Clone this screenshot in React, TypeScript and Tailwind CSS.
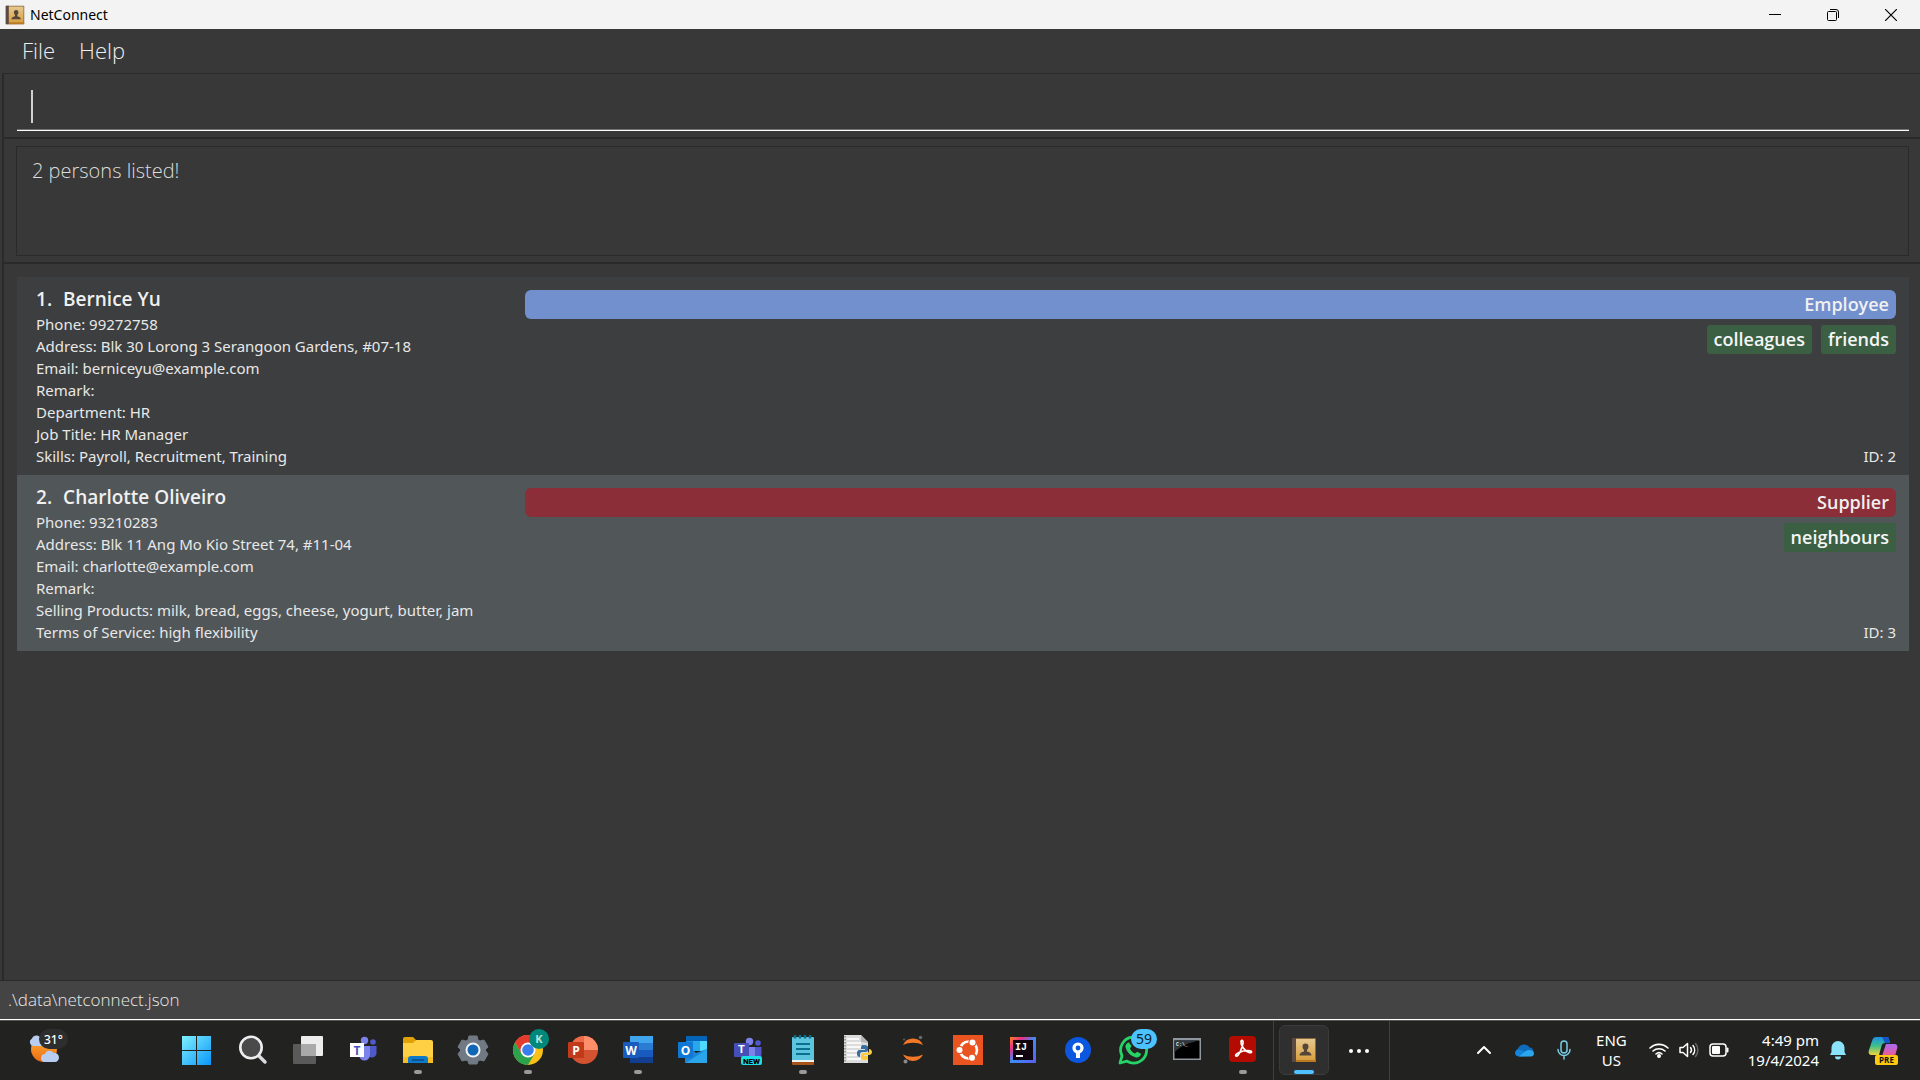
import type { ReactNode } from "react";

type Person = {
  index: number;
  name: string;
  details: string[];
  role: string;
  roleClass: string;
  rowClass: string;
  tags: string[];
  id: number;
};

const people: Person[] = [
  {
    index: 1,
    name: "Bernice Yu",
    details: [
      "Phone: 99272758",
      "Address: Blk 30 Lorong 3 Serangoon Gardens, #07-18",
      "Email: berniceyu@example.com",
      "Remark:",
      "Department: HR",
      "Job Title: HR Manager",
      "Skills: Payroll, Recruitment, Training",
    ],
    role: "Employee",
    roleClass: "bg-[#7290ce]",
    rowClass: "bg-[#3c3e3f]",
    tags: ["colleagues", "friends"],
    id: 2,
  },
  {
    index: 2,
    name: "Charlotte Oliveiro",
    details: [
      "Phone: 93210283",
      "Address: Blk 11 Ang Mo Kio Street 74, #11-04",
      "Email: charlotte@example.com",
      "Remark:",
      "Selling Products: milk, bread, eggs, cheese, yogurt, butter, jam",
      "Terms of Service: high flexibility",
    ],
    role: "Supplier",
    roleClass: "bg-[#8b2e38]",
    rowClass: "bg-[#515658]",
    tags: ["neighbours"],
    id: 3,
  },
];

function BookIcon({ className }: { className: string }) {
  return (
    <svg viewBox="0 0 26 26" className={className} aria-hidden="true">
      <defs>
        <linearGradient id="book" x1="0" y1="0" x2="0" y2="1">
          <stop offset="0" stopColor="#e6c88f" />
          <stop offset="1" stopColor="#d9a040" />
        </linearGradient>
      </defs>
      <rect x="1" y="1" width="24" height="24" rx="1" fill="#8a6a3c" />
      <rect x="1" y="1" width="4" height="24" fill="#5b4a41" />
      <rect x="5" y="2" width="19" height="21" fill="url(#book)" />
      <rect x="5" y="23" width="20" height="2" fill="#b97a22" />
      <path d="M14.500 6.500c2 0 3 1.300 3 3 0 1.600-.7 2.700-1.500 3.500v1.500c2.500.6 4.500 1.500 4.500 4h-12c0-2.500 2-3.400 4.500-4v-1.500c-.8-.8-1.500-1.900-1.500-3.500 0-1.700 1-3 3-3z" fill="#54463a" />
    </svg>
  );
}

function PersonCard({ person }: { person: Person }) {
  return (
    <li className={`flex pt-[10px] pr-[13px] pb-[8px] pl-[19px] ${person.rowClass}`}>
      <div className="w-[489px] shrink-0">
        <h2 className="h-[26px] font-['Open_Sans',sans-serif] text-[19px] leading-[24px] font-semibold text-[#f0f0f0]">
          <span>{person.index}.</span>
          <span className="ml-[11px]">{person.name}</span>
        </h2>
        {person.details.map((line) => (
          <p key={line} className="text-[15px] leading-[22px] text-[#e8e8e8]">
            {line}
          </p>
        ))}
      </div>
      <div className="flex min-w-0 grow flex-col items-end pt-[3px] font-['Open_Sans',sans-serif]">
        <div className={`w-full rounded-md pr-[7px] text-right text-[18px] leading-[29px] font-semibold text-[#f0f0f0] ${person.roleClass}`}>
          {person.role}
        </div>
        <div className="mt-[6px] flex gap-[9px]">
          {person.tags.map((tag) => (
            <span key={tag} className="rounded-[3px] bg-[#3a5f43] px-[7px] text-[18px] leading-[29px] font-semibold text-[#f5f5f5]">
              {tag}
            </span>
          ))}
        </div>
        <p className="mt-auto font-['Noto_Sans',sans-serif] text-[15px] leading-[22px] text-[#e8e8e8]">ID: {person.id}</p>
      </div>
    </li>
  );
}

function Icon({ children }: { children: ReactNode }) {
  return (
    <svg viewBox="0 0 30 30" className="size-[30px] overflow-visible" aria-hidden="true">
      {children}
    </svg>
  );
}

const label = "font-['Open_Sans',sans-serif] font-bold";

const teamsPeople = (
  <>
    <circle cx="23" cy="7" r="2.800" fill="#5059c9" />
    <path d="M17 11h9.500v6.500a4.500 4.500 0 0 1-9 1z" fill="#5059c9" />
    <circle cx="14.500" cy="5.500" r="3.700" fill="#7b83eb" />
    <path d="M9 11h11v9a5.500 5.500 0 0 1-11 0z" fill="#7b83eb" />
  </>
);

const apps: { name: string; running?: boolean; icon: ReactNode }[] = [
  {
    name: "Search",
    icon: (
      <>
        <path d="M20 20l7 7" stroke="#d8dadd" strokeWidth="3.500" strokeLinecap="round" />
        <circle cx="13" cy="12.500" r="10.700" fill="#4a4a4a" stroke="#eceef0" strokeWidth="2.600" />
      </>
    ),
  },
  {
    name: "Task view",
    icon: (
      <>
        <rect x="8" y="1" width="22" height="20" rx="1" fill="#ededed" />
        <rect x="0" y="9" width="23" height="20" rx="1" fill="#5a5a5a" />
        <rect x="8" y="9" width="15" height="12" fill="#aaaaaa" />
      </>
    ),
  },
  {
    name: "Microsoft Teams",
    icon: (
      <g transform="translate(2 0)">
        {teamsPeople}
        <rect x="0" y="8" width="14" height="14" fill="#fff" />
        <text x="7" y="19.500" fontSize="12" textAnchor="middle" fill="#4b53bc" className={label}>T</text>
      </g>
    ),
  },
  {
    name: "File Explorer",
    running: true,
    icon: (
      <>
        <path d="M0 4a2 2 0 0 1 2-2h8l3 3-2 5H0z" fill="#e2a106" />
        <path d="M0 8h10l3-3h15a2 2 0 0 1 2 2v21H0z" fill="#ffd044" />
        <path d="M0 22h30v6H0z" fill="#f8bd22" />
        <path d="M5 28v-4a3 3 0 0 1 3-3h14a3 3 0 0 1 3 3v4z" fill="#0f79c9" />
        <path d="M9 25h12" stroke="#0b4a84" strokeWidth="1.500" />
      </>
    ),
  },
  {
    name: "Settings",
    icon: (
      <>
        <path
          d="M11 1h8l1 4 2 1 4-1 4 7-3 3 3 4-4 7-4-1-2 1-1 3h-8l-1-3-2-1-4 1-4-7 3-4-3-3 4-7 4 1 2-1z"
          fill="#717a84"
          stroke="#717a84"
          strokeLinejoin="round"
        />
        <circle cx="15" cy="15" r="7.500" fill="#f1f3f5" />
        <circle cx="15" cy="15" r="5.500" fill="#1267b4" />
      </>
    ),
  },
  {
    name: "Google Chrome",
    running: true,
    icon: (
      <>
        <circle cx="15" cy="15" r="15" fill="#fbc116" />
        <path d="M15 15L2 7.500A15 15 0 0 1 28 7.500z" fill="#e33b2e" />
        <path d="M15 7.500h13A15 15 0 0 0 2 7.500l6.500 11.250z" fill="#e33b2e" />
        <path d="M2 7.500a15 15 0 0 0 13 22.500l6.500-11.250L8.500 18.750z" fill="#2ba24c" />
        <circle cx="15" cy="15" r="7.500" fill="#fff" />
        <circle cx="15" cy="15" r="5.800" fill="#3a7ded" />
        <circle cx="26" cy="4" r="10" fill="#00897b" />
        <text x="26" y="8" fontSize="11" textAnchor="middle" fill="#b9e2dd" className={label}>K</text>
      </>
    ),
  },
  {
    name: "PowerPoint",
    icon: (
      <>
        <circle cx="16" cy="15" r="14" fill="#d35230" />
        <path d="M16 1a14 14 0 0 0-14 14h14z" fill="#ed6c47" />
        <path d="M16 1a14 14 0 0 1 14 14H16z" fill="#ff8f6b" />
        <rect x="0" y="7" width="16" height="16" rx="1" fill="#c13b1b" />
        <text x="8" y="19.500" fontSize="12" textAnchor="middle" fill="#fff" className={label}>P</text>
      </>
    ),
  },
  {
    name: "Word",
    running: true,
    icon: (
      <>
        <rect x="7" y="1" width="23" height="7" fill="#41a5ee" />
        <rect x="7" y="8" width="23" height="7" fill="#2b7cd3" />
        <rect x="7" y="15" width="23" height="7" fill="#185abd" />
        <rect x="7" y="22" width="23" height="6" fill="#103f91" />
        <rect x="0" y="7" width="16" height="16" rx="1" fill="#185abd" />
        <text x="8" y="19.500" fontSize="12" textAnchor="middle" fill="#fff" className={label}>W</text>
      </>
    ),
  },
  {
    name: "Outlook",
    icon: (
      <>
        <rect x="8" y="1" width="21" height="14" fill="#1490df" />
        <rect x="8" y="1" width="21" height="5" fill="#0364b8" />
        <rect x="22" y="6" width="7" height="10" fill="#50d9ff" />
        <rect x="15" y="6" width="7" height="10" fill="#28a8ea" />
        <path d="M7 15h8l3 3 11-4v14H7z" fill="#1a86d8" />
        <path d="M29 14v14H8z" fill="#2aa5ea" />
        <rect x="0" y="7" width="15" height="16" rx="1" fill="#0f78d4" />
        <text x="7.500" y="19.500" fontSize="12" textAnchor="middle" fill="#fff" className={label}>O</text>
      </>
    ),
  },
  {
    name: "Microsoft Teams (new)",
    icon: (
      <g transform="translate(1 0)">
        <g transform="translate(1 1)">{teamsPeople}</g>
        <rect x="0" y="8" width="15" height="14" rx="1" fill="#464eb8" />
        <rect x="7" y="21" width="21" height="9" rx="2" fill="#18e0e6" />
        <text x="7.500" y="18" fontSize="11" textAnchor="middle" fill="#fff" className="font-['Roboto',sans-serif] font-bold">T</text>
        <text x="17.500" y="29" fontSize="8" textAnchor="middle" fill="#000" className="font-['Roboto',sans-serif] font-black">NEW</text>
      </g>
    ),
  },
  {
    name: "Notepad",
    running: true,
    icon: (
      <>
        <rect x="4" y="2" width="22" height="24" rx="1" fill="#5cc4dd" />
        <rect x="4" y="25" width="22" height="2" fill="#eef5f6" />
        <path d="M4 27h22v2a1 1 0 0 1-1 1H5a1 1 0 0 1-1-1z" fill="#a7541a" />
        <path d="M8 9h14M8 14h14M8 19h14" stroke="#0b6f8f" strokeWidth="1.800" />
        <path d="M7 0v3.500M12 0v3.500M17 0v3.500M22 0v3.500" stroke="#0b6f8f" strokeWidth="2.400" />
      </>
    ),
  },
  {
    name: "Python file",
    icon: (
      <g transform="translate(1 0)">
        <path d="M0 0h17l7 7v21H0z" fill="#dcdcdc" />
        <path d="M17 0l7 8-7-1z" fill="#b5b5b5" />
        <path d="M3 4h12M3 8h14M3 12h18M3 16h12M3 20h12M3 24h14" stroke="#f8f8f8" strokeWidth="2" />
        <path d="M1 1v27" stroke="#888" strokeWidth="1.500" strokeDasharray="1.500 1.500" />
        <path d="M20 10c-3 0-3 1.500-3 3v1h4v1h-5c-3 0-3 2-3 4s1 3 3 3v-3c0-1 1-2 2-2h4c1 0 2-1 2-2v-3c0-1-1-2-4-2z" fill="#366f9f" />
        <path d="M21 25c3 0 3-1.500 3-3v-1h-4v-1h5c2 0 3-2 3-3s-1-3-3-3v2c0 1-1 2-2 2h-4c-1 0-2 1-2 2v3c0 1 1 2 4 2z" fill="#ffca3a" />
      </g>
    ),
  },
  {
    name: "Jupyter",
    icon: (
      <>
        <path d="M5 10a11 11 0 0 1 20 0 15 9 0 0 0-20 0z" fill="#f37726" />
        <path d="M5 19.500a11 11 0 0 0 20 0 15 9 0 0 1-20 0z" fill="#f37726" />
        <circle cx="22.500" cy="2.500" r="1.700" fill="#6b6b6b" />
        <circle cx="7.500" cy="26.500" r="2" fill="#8a8a8a" />
        <circle cx="6" cy="4.500" r="1.100" fill="#5c5c5c" />
      </>
    ),
  },
  {
    name: "Ubuntu",
    icon: (
      <>
        <rect width="30" height="30" fill="#e95420" />
        <circle cx="15.500" cy="15" r="8.500" fill="none" stroke="#fff" strokeWidth="2.600" />
        <circle cx="6.500" cy="15" r="4.200" fill="#e95420" />
        <circle cx="19.500" cy="7.500" r="4.200" fill="#e95420" />
        <circle cx="19.500" cy="22.500" r="4.200" fill="#e95420" />
        <circle cx="6.500" cy="15" r="3" fill="#fff" />
        <circle cx="19.500" cy="7.500" r="3" fill="#fff" />
        <circle cx="19" cy="22.800" r="3" fill="#fff" />
      </>
    ),
  },
  {
    name: "IntelliJ IDEA",
    icon: (
      <>
        <defs>
          <linearGradient id="idea" x1="0" y1="0" x2="1" y2="1">
            <stop offset="0" stopColor="#fc801d" />
            <stop offset="0.250" stopColor="#e8308a" />
            <stop offset="0.500" stopColor="#3d8df5" />
            <stop offset="1" stopColor="#5a5cf0" />
          </linearGradient>
        </defs>
        <rect x="2" y="2" width="26" height="26" fill="url(#idea)" />
        <rect x="5" y="5" width="20" height="20" fill="#10050f" />
        <text x="7" y="15" fontSize="10" fill="#fff" className="font-['Liberation_Mono',monospace] font-bold">IJ</text>
        <rect x="8" y="20" width="7" height="2" fill="#fff" />
      </>
    ),
  },
  {
    name: "Sourcetree",
    icon: (
      <>
        <circle cx="15" cy="15" r="13" fill="#0b57e0" />
        <circle cx="15" cy="13" r="4" fill="none" stroke="#fff" strokeWidth="3.200" />
        <rect x="13" y="17" width="4" height="6" fill="#fff" />
      </>
    ),
  },
  {
    name: "WhatsApp",
    icon: (
      <>
        <path d="M2 28l2-7.200A13 13 0 1 1 9 26.200z" fill="none" stroke="#25d366" strokeWidth="2.800" strokeLinejoin="round" />
        <path d="M11 7.500l2.500 3.500-1.500 2.500c1 2.500 2.500 4 5 5l2.300-1.700 3.700 2c-.5 3-3 4-5 3.600-5-1-9.500-5.400-10.500-10.400-.3-2 1.500-4.500 3.500-4.500z" fill="#25d366" />
        <rect x="13" y="-6" width="26" height="20" rx="10" fill="#4cc2ff" />
        <text x="26" y="9" fontSize="14" textAnchor="middle" fill="#10222c" className="font-['Noto_Sans',sans-serif]">59</text>
      </>
    ),
  },
  {
    name: "Command Prompt",
    icon: (
      <>
        <rect x="0" y="3" width="28" height="22" fill="#8f969d" />
        <rect x="1.500" y="5.500" width="25" height="18" fill="#000" />
        <path d="M1.500 5.500h25c-10 2-20 6-25 12z" fill="#30353a" />
        <text x="3" y="11" fontSize="5" fill="#e6e6e6" className="font-['Liberation_Mono',monospace] font-bold">C:\_</text>
      </>
    ),
  },
  {
    name: "Adobe Acrobat",
    running: true,
    icon: (
      <>
        <rect x="1" y="1" width="27" height="26" rx="4" fill="#b30b00" />
        <path d="M8 21c-2-1.500 5-5.500 12-5.500 5 0 4 3 1 2-4-1.500-8.500-7-8-11 .5-2 2.500-1 2 1.500-.7 4.500-4.500 14.500-7 13z" fill="none" stroke="#fff" strokeWidth="1.700" strokeLinejoin="round" />
      </>
    ),
  },
];

function Taskbar() {
  return (
    <footer className="flex h-[60px] shrink-0 border-t border-[#555] bg-[#222321] font-['Noto_Sans',sans-serif] text-white">
      <button type="button" aria-label="Weather" className="flex w-[168px] items-start pt-[14px] pl-[28px]">
        <svg viewBox="0 0 42 30" className="h-[30px] w-[42px] overflow-visible" aria-hidden="true">
          <defs>
            <linearGradient id="sun" x1="0" y1="0" x2="0" y2="1">
              <stop offset="0" stopColor="#fbb53c" />
              <stop offset="1" stopColor="#ee6a10" />
            </linearGradient>
          </defs>
          <circle cx="16" cy="14" r="13" fill="url(#sun)" />
          <path d="M5 11a4 4 0 0 1-1-7.500C5 0 10-.5 12 2l2 9z" fill="#b8cdf0" />
          <path d="M17 27a4 4 0 0 1 0-8c1-4 7-4 8.500-1 3.500-.5 5.500 2 5.500 4.500S29 27 27 27z" fill="#b8cdf0" />
          <rect x="11" y="-6" width="29" height="20" rx="10" fill="#2e2e2e" />
          <text x="16" y="9" fontSize="12" fill="#fff" className="font-['Noto_Sans',sans-serif] font-medium">31°</text>
        </svg>
      </button>
      <button type="button" aria-label="Start" className="flex w-[57px] flex-col items-center pt-[14px] pr-[2px]">
        <Icon>
          <defs>
            <linearGradient id="start" x1="0" y1="0" x2="1" y2="1">
              <stop offset="0" stopColor="#7ff0fd" />
              <stop offset="1" stopColor="#0a96fa" />
            </linearGradient>
          </defs>
          <path d="M1 1h14v14H1zM16 1h14v14H16zM1 16h14v14H1zM16 16h14v14H16z" fill="url(#start)" />
        </Icon>
      </button>
      {apps.map((app) => (
        <button key={app.name} type="button" aria-label={app.name} className="flex w-[55px] flex-col items-center pt-[14px]">
          <Icon>{app.icon}</Icon>
          {app.running && <span className="mt-[5px] h-1 w-2 rounded-full bg-[#9a9a9a]" />}
        </button>
      ))}
      <div className="ml-[3px] flex w-[117px] border-x border-[#414141]">
        <button type="button" aria-label="NetConnect" className="mt-1 ml-[5px] flex h-[50px] w-[50px] flex-col items-center rounded-md border border-[#3b3b3b] bg-[#2f2f2f] pt-[11px]">
          <BookIcon className="size-[26px]" />
          <span className="mt-[7px] h-1 w-5 rounded-full bg-[#4cc2ff]" />
        </button>
        <button type="button" aria-label="More apps" className="flex grow items-center justify-center gap-1">
          <span className="size-1 rounded-full bg-white" />
          <span className="size-1 rounded-full bg-white" />
          <span className="size-1 rounded-full bg-white" />
        </button>
      </div>
      <div className="ml-auto flex items-center pr-[22px] pb-[2px] text-[15px] leading-5">
        <button type="button" aria-label="Show hidden icons" className="mr-[22px]">
          <svg viewBox="0 0 16 10" className="h-[10px] w-4" fill="none" stroke="#fff" strokeWidth="2" strokeLinecap="round" strokeLinejoin="round"><path d="M2 8l6-6 6 6" /></svg>
        </button>
        <button type="button" aria-label="OneDrive" className="mr-[23px]">
          <svg viewBox="0 0 20 14" className="h-[14px] w-5">
            <path d="M4.500 13a4 4 0 0 1-.5-7.500A6.500 6.500 0 0 1 15.500 4.500 4.300 4.300 0 0 1 16 13z" fill="#0f6cbd" />
            <path d="M4.500 13.500C0 13 0 7.500 4 6.800c3-.5 5 1 7 2.200L17 13z" fill="#1483d8" />
            <path d="M5 13.500l6-5c3-3 9-1.500 9 2 0 2-1.500 3-3 3z" fill="#2aa7ee" />
          </svg>
        </button>
        <button type="button" aria-label="Microphone" className="mr-[25px]">
          <svg viewBox="0 0 14 20" className="h-5 w-[14px]" fill="none" stroke="#79cbe6" strokeWidth="1.500" strokeLinecap="round"><rect x="4" y="1" width="6" height="12" rx="3" /><path d="M1 9.500a6 6 0 0 0 12 0M7 16v3" /></svg>
        </button>
        <button type="button" aria-label="Input language" className="mr-[22px] text-center">
          ENG
          <br />
          US
        </button>
        <button type="button" aria-label="Network, sound and battery" className="flex items-center gap-[10px]">
          <svg viewBox="0 0 20 16" className="h-4 w-5" fill="none" stroke="#fff" strokeWidth="1.600" strokeLinecap="round"><path d="M1 6a13 13 0 0 1 18 0M4 9a9 9 0 0 1 12 0M7 12a4.500 4.500 0 0 1 6 0" /><circle cx="10" cy="14" r="1.200" fill="#fff" /></svg>
          <svg viewBox="0 0 20 16" className="h-4 w-5" fill="none" stroke="#fff" strokeWidth="1.500" strokeLinejoin="round" strokeLinecap="round"><path d="M1 5.500h3L8.500 1.500v13L4 10.500H1zM11.500 5.500a4 4 0 0 1 0 5M14 3.500a7 7 0 0 1 0 9" /><path d="M16.500 1.500a10 10 0 0 1 0 13" stroke="#666" /></svg>
          <svg viewBox="0 0 20 14" className="h-[14px] w-5" fill="none" stroke="#fff" strokeWidth="1.500"><rect x="1" y="1" width="16" height="12" rx="3" /><rect x="3" y="3" width="8" height="8" rx="1" fill="#fff" stroke="none" /><path d="M18.500 5.500v3" strokeWidth="2" strokeLinecap="round" /></svg>
        </button>
        <button type="button" className="ml-[19px] text-right">
          4:49 pm
          <br />
          19/4/2024
        </button>
        <button type="button" aria-label="Notifications" className="ml-[10px]">
          <svg viewBox="0 0 18 20" className="h-5 w-[18px]" fill="#8be3fb"><path d="M9 1a6.500 6.500 0 0 1 6.500 6.500V12l1.500 3H1l1.500-3V7.500A6.500 6.500 0 0 1 9 1zM6 16.500h6a3 3 0 0 1-6 0z" /></svg>
        </button>
        <button type="button" aria-label="Copilot preview" className="ml-[21px]">
          <Icon>
            <defs>
              <linearGradient id="pilotA" x1="0" y1="0" x2="0" y2="1">
                <stop offset="0" stopColor="#1b8fe8" />
                <stop offset="0.500" stopColor="#3fc08a" />
                <stop offset="1" stopColor="#f2d43a" />
              </linearGradient>
              <linearGradient id="pilotB" x1="0" y1="0" x2="0" y2="1">
                <stop offset="0" stopColor="#a76cf5" />
                <stop offset="1" stopColor="#f0588c" />
              </linearGradient>
            </defs>
            <path d="M8 2h11c2 0 2 3 3 6h-5c-2 0-3 1-3.500 3L11 20H4c-3 0-4-2-3-5l3-9c.8-2.500 2-4 4-4z" fill="url(#pilotA)" />
            <path d="M14 2h5c2 0 2 3 3 6h-5z" fill="#1456c8" />
            <path d="M18 9h8c3 0 4 2 3 5l-2 7H14z" fill="url(#pilotB)" />
            <rect x="7" y="20" width="23" height="10" rx="2" fill="#ffc90e" />
            <text x="18.500" y="28" fontSize="8" textAnchor="middle" fill="#111" className={label}>PRE</text>
          </Icon>
        </button>
      </div>
    </footer>
  );
}

export default function App() {
  return (
    <div className="flex min-h-screen flex-col bg-[#383838] font-['Noto_Sans',sans-serif]">
      <header className="flex h-[29px] shrink-0 items-center bg-[#f3f3f3] pl-[5px] text-black">
        <BookIcon className="size-5" />
        <h1 className="ml-[5px] text-[14px] leading-5">NetConnect</h1>
        <div className="ml-auto flex h-full">
          <button type="button" aria-label="Minimize" className="flex w-[58px] items-center justify-center">
            <svg viewBox="0 0 12 12" className="size-3" stroke="#000"><path d="M0 5.500h12" /></svg>
          </button>
          <button type="button" aria-label="Restore" className="flex w-[58px] items-center justify-center">
            <svg viewBox="0 0 12 12" className="size-3" fill="none" stroke="#000"><rect x="0.500" y="2.500" width="9" height="9" rx="1" /><path d="M3 .5h6a2.500 2.500 0 0 1 2.500 2.500v6" /></svg>
          </button>
          <button type="button" aria-label="Close" className="flex w-[58px] items-center justify-center">
            <svg viewBox="0 0 12 12" className="size-3" stroke="#000" strokeWidth="1.200"><path d="M0 0l12 12M12 0L0 12" /></svg>
          </button>
        </div>
      </header>

      <nav className="flex h-11 shrink-0 items-start gap-6 pl-[22px] font-['Open_Sans',sans-serif] text-[22px] leading-[42px] font-light text-[#eee]">
        <button type="button">File</button>
        <button type="button">Help</button>
      </nav>

      <main className="ml-[2px] flex grow flex-col border-t border-l-2 border-[#2a2a2a]">
        <section className="h-[65px] border-b-2 border-[#2a2a2a] pr-[11px] pl-[13px]">
          <div className="relative">
            <input
              type="text"
              aria-label="Command"
              autoFocus
              className="block h-[57px] w-full border-b border-white bg-transparent px-[14px] pt-1 font-['Open_Sans',sans-serif] text-[24px] font-light text-white caret-transparent shadow-[inset_0_-1px_0_#707070] outline-none"
            />
            <span aria-hidden="true" className="absolute top-4 left-[14px] h-[33px] w-[2px] bg-[#d0d0d0]" />
          </div>
        </section>
        <section className="border-b-2 border-[#2a2a2a] pt-[7px] pr-[11px] pb-[6px] pl-3">
          <output className="block h-[110px] border border-[#2a2a2a] px-[15px] pt-[8px] font-['Open_Sans',sans-serif] text-[20px] leading-8 font-light text-[#ddd]">
            2 persons listed!
          </output>
        </section>
        <ul className="pt-[13px] pr-[11px] pl-[13px]">
          {people.map((person) => (
            <PersonCard key={person.id} person={person} />
          ))}
        </ul>
      </main>

      <div className="h-10 shrink-0 border-t border-b border-t-[#2a2a2a] border-b-white bg-[#444] pl-2 font-['Open_Sans',sans-serif] text-[17px] leading-[37px] font-light text-[#e8e8e8]">
        .\data\netconnect.json
      </div>
      <Taskbar />
    </div>
  );
}
